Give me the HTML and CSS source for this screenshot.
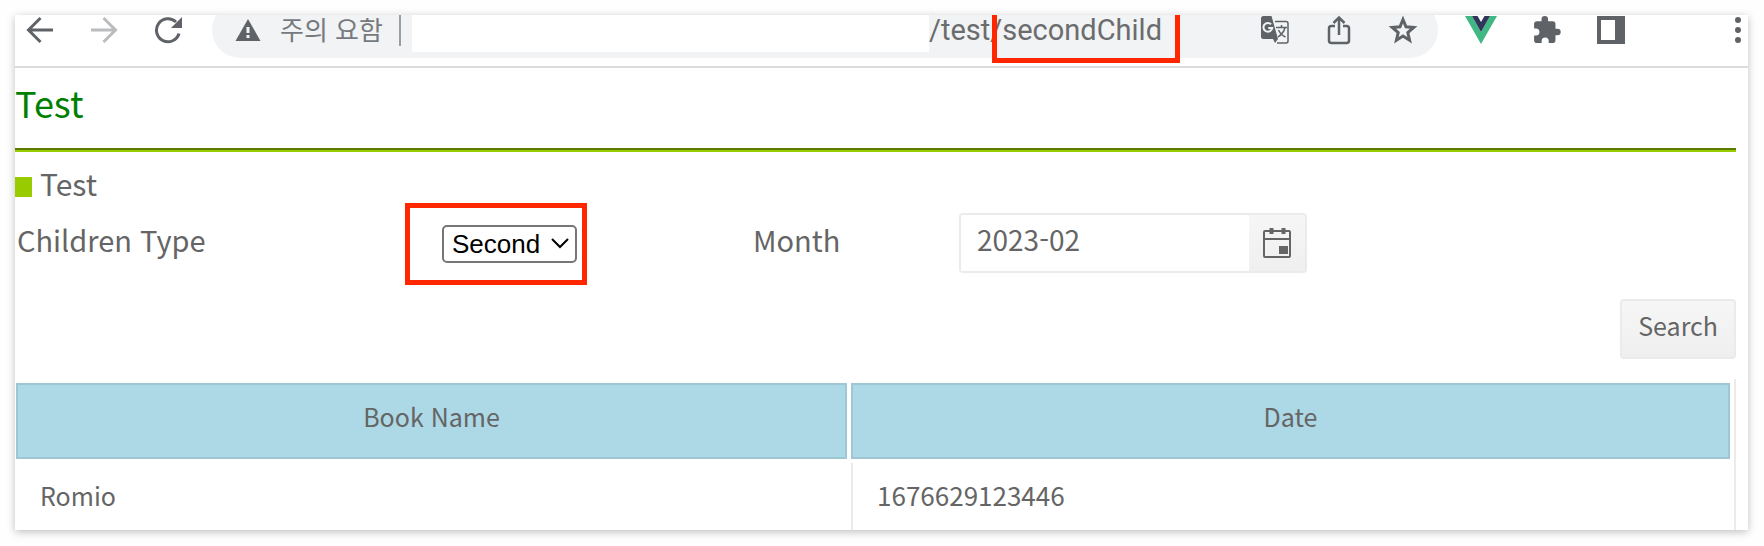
FILE: index.html
```
<!DOCTYPE html>
<html lang="ko">
<head>
  <meta charset="UTF-8" />
  <meta name="viewport" content="width=device-width, initial-scale=1" />
  <title>Test</title>
  <link rel="stylesheet" href="styles.css">
</head>
<body>
  <div class="window">
    <div class="toolbar">
      <div class="nav-buttons">
        <button type="button" aria-label="Back">
          <svg width="28" height="28" viewBox="0 0 28 28" fill="none" stroke="#5f6368" stroke-width="3"><path d="M27 14H3M14.500 2L2.500 14L14.500 26"/></svg>
        </button>
        <button type="button" aria-label="Forward">
          <svg width="28" height="28" viewBox="0 0 28 28" fill="none" stroke="#babcbe" stroke-width="3"><path d="M1 14H25M13.500 2L25.500 14L13.500 26"/></svg>
        </button>
        <button type="button" aria-label="Reload">
          <svg width="28" height="28" viewBox="0 0 28 28"><path d="M25 17.500A11.500 11.500 0 1 1 22 6" fill="none" stroke="#5f6368" stroke-width="3"/><path d="M28 1V12H17Z" fill="#5f6368"/></svg>
        </button>
      </div>

      <div class="address">
        <svg class="warning" width="26" height="22" viewBox="0 0 26 22"><path d="M13 0L25.500 22H.5Z" fill="#5f6368"/><path d="M11.500 8h3v6h-3zM11.500 16h3v3h-3z" fill="#f1f3f4"/></svg>
        <span class="insecure">주의 요함</span>
        <span class="divider"></span>
        <span class="blank"></span>
        <span class="url">/test/<span class="mark">secondChild</span></span>
        <div class="address-icons">
          <button type="button" aria-label="Translate">
            <svg width="30" height="30" viewBox="0 0 30 30"><path d="M15 6.500H26a2 2 0 0 1 2 2V26a2 2 0 0 1-2 2H17" fill="none" stroke="#5f6368" stroke-width="1.500"/><path d="M3.500 1H11.500L18 24H3.500A2.500 2.500 0 0 1 1 21.500V3.500A2.500 2.500 0 0 1 3.500 1Z" fill="#5f6368"/><path d="M13 24h5l-3 4z" fill="#5f6368"/><path d="M11 9.200A4.400 4.400 0 1 0 12.200 13H8.200" fill="none" stroke="#f1f3f4" stroke-width="2"/><path d="M16 12.500H27M21.500 10v2.500M25 12.500C24 17 21 20 18 22M18.500 15C20 18 23 21 25.500 22" fill="none" stroke="#5f6368" stroke-width="1.500"/></svg>
          </button>
          <button type="button" aria-label="Share">
            <svg width="24" height="30" viewBox="0 0 24 30" fill="none" stroke="#5f6368" stroke-width="2.500"><path d="M8 11H4.500A2.500 2.500 0 0 0 2 13.500V25.500A2.500 2.500 0 0 0 4.500 28H19.500A2.500 2.500 0 0 0 22 25.500V13.500A2.500 2.500 0 0 0 19.500 11H16M12 20V3M6.500 8L12 2.500L17.500 8"/></svg>
          </button>
          <button type="button" aria-label="Bookmark">
            <svg width="30" height="30" viewBox="0 0 30 30" fill="none" stroke="#5f6368" stroke-width="3"><path d="M15 4.500L18 11.800L25.700 12.500L19.800 17.500L21.600 25.200L15 21.100L8.400 25.200L10.200 17.500L4.300 12.500L12 11.800Z"/></svg>
          </button>
        </div>
      </div>

      <div class="extensions">
        <button type="button" aria-label="Vue devtools">
          <svg width="32" height="28" viewBox="0 0 32 28"><path d="M0 0H7L16 16L25 0H32L16 28Z" fill="#41b883"/><path d="M7 0H12.500L16 6L19.500 0H25L16 16Z" fill="#2f3558"/></svg>
        </button>
        <button type="button" aria-label="Extensions">
          <svg width="30" height="30" viewBox="0 0 23 23" fill="#5f6368"><path d="M19.500 10.500H18V6.700c0-1.100-.9-2-2-2h-3.700V3.200a2.500 2.500 0 0 0-5 0v1.500H3.600c-1.100 0-2 .9-2 2v3.600H3a2.700 2.700 0 0 1 0 5.400H1.600v3.800c0 1.100.9 2 2 2h3.800V20a2.700 2.700 0 0 1 5.400 0v1.500H16c1.100 0 2-.9 2-2v-4h1.500a2.500 2.500 0 0 0 0-5z"/></svg>
        </button>
        <button type="button" aria-label="Side panel">
          <svg width="28" height="28" viewBox="0 0 28 28"><path fill-rule="evenodd" d="M0 0H28V28H0ZM4 4V24H18V4Z" fill="#5f6368"/></svg>
        </button>
      </div>
      <button type="button" class="more" aria-label="Menu">
        <svg width="6" height="28" viewBox="0 0 6 28" fill="#5f6368"><circle cx="3" cy="4" r="3"/><circle cx="3" cy="14" r="3"/><circle cx="3" cy="24" r="3"/></svg>
      </button>
    </div>

    <main>
      <h1>Test</h1>
      <h2>Test</h2>

      <form>
        <div class="filters">
          <label for="childType">Children Type</label>
          <div class="field">
            <span class="select-box">
              <select id="childType">
                <option>First</option>
                <option selected>Second</option>
              </select>
              <svg class="chevron" width="18" height="11" viewBox="0 0 18 11" fill="none" stroke="#000" stroke-width="2"><path d="M1 1L9 9L17 1"/></svg>
            </span>
          </div>
          <label for="month">Month</label>
          <div class="datepicker">
            <input type="text" id="month" value="2023-02">
            <button type="button" aria-label="Open calendar">
              <svg width="30" height="32" viewBox="0 0 30 32" fill="none" stroke="#656565" stroke-width="2"><rect x="2" y="4" width="26" height="26" rx="1"/><path d="M2 12H28"/><path d="M9.500 1v6M21.500 1v6" stroke-width="4"/><path d="M17 19h9v8h-9z" fill="#656565" stroke="none"/></svg>
            </button>
          </div>
        </div>
        <div class="actions">
          <button type="button" class="search">Search</button>
        </div>
      </form>

      <table>
        <thead>
          <tr>
            <th class="name">Book Name</th>
            <th>Date</th>
          </tr>
        </thead>
        <tbody>
          <tr>
            <td>Romio</td>
            <td>1676629123446</td>
          </tr>
        </tbody>
      </table>
    </main>
  </div>
</body>
</html>
```
FILE: styles.css
```
* {
  box-sizing: border-box;
}
body {
  margin: 0;
  padding: 15px 16px 16px 15px;
  background: #fefefe;
  color: #656565;
  font-family: "Noto Sans CJK KR", sans-serif;
  font-size: 25px;
}
button {
  padding: 0;
  border: 0;
  background: none;
  font-family: inherit;
  color: inherit;
}
svg {
  display: block;
}
.window {
  overflow: hidden;
  background: #fff;
  box-shadow: 0 2px 8px rgba(0, 0, 0, 0.25);
}

/* browser bar, the top of it is cut by the window edge */
.toolbar {
  display: flex;
  align-items: center;
  height: 66px;
  margin-top: -13px;
  padding: 0 7px 8px 11px;
  border-bottom: 2px solid #dcdcdc;
}
.nav-buttons {
  display: flex;
  gap: 36px;
  margin-right: 30px;
}
.address {
  display: flex;
  flex: 1;
  align-items: center;
  height: 56px;
  padding: 0 20px 0 23px;
  border-radius: 28px;
  background: #f1f3f4;
  white-space: nowrap;
}
.insecure {
  margin-left: 19px;
  padding-bottom: 2px;
  color: #767a7e;
  font-size: 26px;
  line-height: 26px;
}
.divider {
  width: 2px;
  height: 32px;
  margin: 0 11px 0 16px;
  background: #9a9da1;
}
.blank {
  flex: 1;
  height: 44px;
  background: #fff;
}
.url {
  color: #6b6c6e;
  font-family: Roboto, sans-serif;
  font-size: 29px;
  line-height: 32px;
}
.mark {
  position: relative;
}
.mark::after,
.select-box::before {
  content: '';
  position: absolute;
  border: 5px solid #ff2600;
  pointer-events: none;
}
.mark::after {
  inset: -16px -18px -16px -10px;
}
.address-icons {
  display: flex;
  align-items: center;
  gap: 37px;
  margin-left: 98px;
}
.extensions {
  display: flex;
  align-items: center;
  gap: 35px;
  margin: 0 110px 0 27px;
}

main {
  padding-right: 12px;
}
h1 {
  margin: 0;
  padding: 6px 0 20px;
  border-bottom: 2px solid #9c0;
  box-shadow: inset 0 -2px #5c7a00;
  color: #008000;
  font-size: 36px;
  font-weight: 400;
  line-height: 56px;
}
h2 {
  display: flex;
  align-items: center;
  gap: 8px;
  margin: 0;
  padding-top: 11px;
  font-size: 30px;
  font-weight: 400;
  line-height: 40px;
}
h2::before {
  content: '';
  width: 17px;
  height: 20px;
  margin-top: 8px;
  background: #9c0;
}
.filters {
  display: grid;
  grid-template-columns: 427fr 309fr 208fr 777fr;
  align-items: center;
  margin-top: 10px;
  font-size: 29px;
  line-height: 40px;
}
.filters label {
  padding: 0 0 8px 2px;
}
.field {
  padding-bottom: 4px;
}
.select-box {
  display: inline-flex;
  position: relative;
  align-items: center;
}
.select-box::before {
  inset: -22px -10px -22px -37px;
}
select {
  width: 135px;
  height: 38px;
  padding: 0 8px;
  border: 2px solid #767676;
  border-radius: 5px;
  background: #fff;
  color: #000;
  font-family: "Liberation Sans", sans-serif;
  font-size: 26px;
  appearance: none;
}
.chevron {
  position: absolute;
  right: 8px;
  pointer-events: none;
}
.datepicker {
  display: flex;
  width: 348px;
  height: 60px;
  border: 2px solid #ebebeb;
  border-radius: 4px;
  overflow: hidden;
}
.datepicker input {
  flex: 1;
  min-width: 0;
  padding: 0 16px 8px;
  border: 0;
  color: inherit;
  font-family: inherit;
  font-size: 28px;
}
.datepicker button {
  display: flex;
  align-items: center;
  justify-content: center;
  width: 56px;
  background: linear-gradient(#f6f6f6, #efefef);
}
.actions {
  display: flex;
  justify-content: flex-end;
  padding: 26px 0 20px;
}
.search {
  height: 60px;
  padding: 0 16px 8px;
  border: 2px solid #ebebeb;
  border-radius: 4px;
  background: linear-gradient(#f6f6f6, #efefef);
  font-size: 25px;
}

table {
  width: calc(100% + 3px);
  margin-left: -3px;
  margin-bottom: -4px;
  border-right: 2px solid #ebebeb;
  border-spacing: 4px 4px;
  table-layout: fixed;
}
th {
  height: 76px;
  padding: 0 0 10px;
  border: 2px solid #9fc7d3;
  background: #add8e6;
  font-weight: 400;
}
.name {
  width: 48.6%;
}
td {
  height: 67px;
  padding: 0 24px 4px;
}
td + td {
  border-left: 2px solid #ebebeb;
  font-size: 26px;
}
```
